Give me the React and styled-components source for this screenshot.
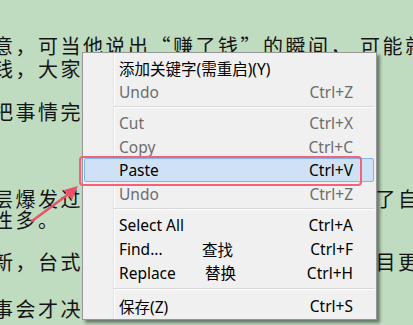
import React from 'react'
import styled, { createGlobalStyle } from 'styled-components'

const GlobalStyle = createGlobalStyle`
  html, body {
    margin: 0;
    padding: 0;
  }
  body {
    background: #c0dcc0;
  }
`

const Page = styled.div`
  position: relative;
  width: 413px;
  height: 325px;
  overflow: hidden;
  background: #c0dcc0;
`

const Article = styled.div`
  padding-top: 34px;
  font-family: 'Noto Sans CJK SC', sans-serif;
  font-size: 20px;
  letter-spacing: 2.5px;
  color: #141414;
`

const Para = styled.div`
  margin-top: ${p => p.$gap || 0}px;
  line-height: ${p => p.$lh || 22}px;
`

const Line = styled.div`
  white-space: nowrap;
  margin-left: -7px;
`

const Menu = styled.div`
  position: absolute;
  left: 82px;
  top: 52px;
  box-sizing: border-box;
  width: 295px;
  padding: 3px 2px 2px 1px;
  border: 1px solid #979797;
  background: linear-gradient(
    to right,
    #f0f0f0 0 30px,
    #e2e3e3 30px 31px,
    #ffffff 31px 32px,
    #f0f0f0 32px
  );
  box-shadow: 3px 3px 3px rgba(0, 0, 0, 0.45);
  font-family: 'Noto Sans', 'Noto Sans CJK SC', sans-serif;
  font-size: 15.5px;
`

const Item = styled.div`
  display: grid;
  grid-template-columns: 83px 1fr auto;
  align-items: center;
  height: 23.5px;
  box-sizing: border-box;
  padding: 0 20px 0 34px;
  color: ${p => (p.$disabled ? '#6d6d6d' : '#000')};
  border: 1px solid ${p => (p.$active ? '#84b4e8' : 'transparent')};
  border-radius: 2px;
  background: ${p => (p.$active ? '#cfe2f5' : 'transparent')};
  white-space: nowrap;
`

const Label = styled.span``

const Note = styled.span`
  padding-left: ${p => p.$indent || 0}px;
`

const Keys = styled.span`
  text-align: right;
`

const Separator = styled.div`
  height: ${p => p.$h || 8}px;
  margin-left: 30px;
  display: flex;
  flex-direction: column;
  justify-content: center;
  &::before {
    content: '';
    height: 1px;
    background: #d7d7d7;
  }
  &::after {
    content: '';
    height: 1px;
    background: #ffffff;
  }
`

const Highlight = styled.div`
  position: absolute;
  left: 79px;
  top: 156px;
  width: 283px;
  height: 30px;
  box-sizing: border-box;
  border: 2px solid #f2637b;
  border-radius: 4px;
`

const Arrow = styled.svg`
  position: absolute;
  left: 28px;
  top: 180px;
`

const items = [
  { label: '添加关键字(需重启)(Y)' },
  { label: 'Undo', keys: 'Ctrl+Z', disabled: true },
  { sep: true },
  { label: 'Cut', keys: 'Ctrl+X', disabled: true },
  { label: 'Copy', keys: 'Ctrl+C', disabled: true },
  { label: 'Paste', keys: 'Ctrl+V', active: true },
  { label: 'Undo', keys: 'Ctrl+Z', disabled: true },
  { sep: true },
  { label: 'Select All', keys: 'Ctrl+A' },
  { label: 'Find...', note: '查找', keys: 'Ctrl+F' },
  { label: 'Replace', note: '替换', indent: 3, keys: 'Ctrl+H' },
  { sep: true, h: 10 },
  { label: '保存(Z)', keys: 'Ctrl+S' },
]

export default function App() {
  return (
    <Page>
      <GlobalStyle />
      <Article>
        <Para $lh={23}>
          <Line>意，可当他说出“赚了钱”的瞬间，{'\u00a0'}可能就</Line>
          <Line>钱，大家都会对他刮目相看。</Line>
        </Para>
        <Para $gap={21}>
          <Line>把事情完成得漂亮，</Line>
        </Para>
        <Para $gap={65} $lh={21}>
          <Line>层爆发过一次激烈的争论，大家都选择了自己的道路</Line>
          <Line>性多。</Line>
        </Para>
        <Para $gap={21}>
          <Line>新，台式机的配置和外观也比以前更醒目更加</Line>
        </Para>
        <Para $gap={25}>
          <Line>事会才决定下来。</Line>
        </Para>
      </Article>

      <Menu>
        {items.map((it, i) =>
          it.sep ? (
            <Separator key={i} $h={it.h} />
          ) : (
            <Item key={i} $disabled={it.disabled} $active={it.active}>
              <Label>{it.label}</Label>
              <Note $indent={it.indent}>{it.note}</Note>
              <Keys>{it.keys}</Keys>
            </Item>
          )
        )}
      </Menu>

      <Highlight />
      <Arrow width="56" height="46" viewBox="0 0 56 46">
        <line x1="4" y1="41" x2="42" y2="13" stroke="#ee5068" strokeWidth="2.5" strokeLinecap="round" />
        <polygon points="50,6 36,10 44,20" fill="#ee5068" />
      </Arrow>
    </Page>
  )
}
